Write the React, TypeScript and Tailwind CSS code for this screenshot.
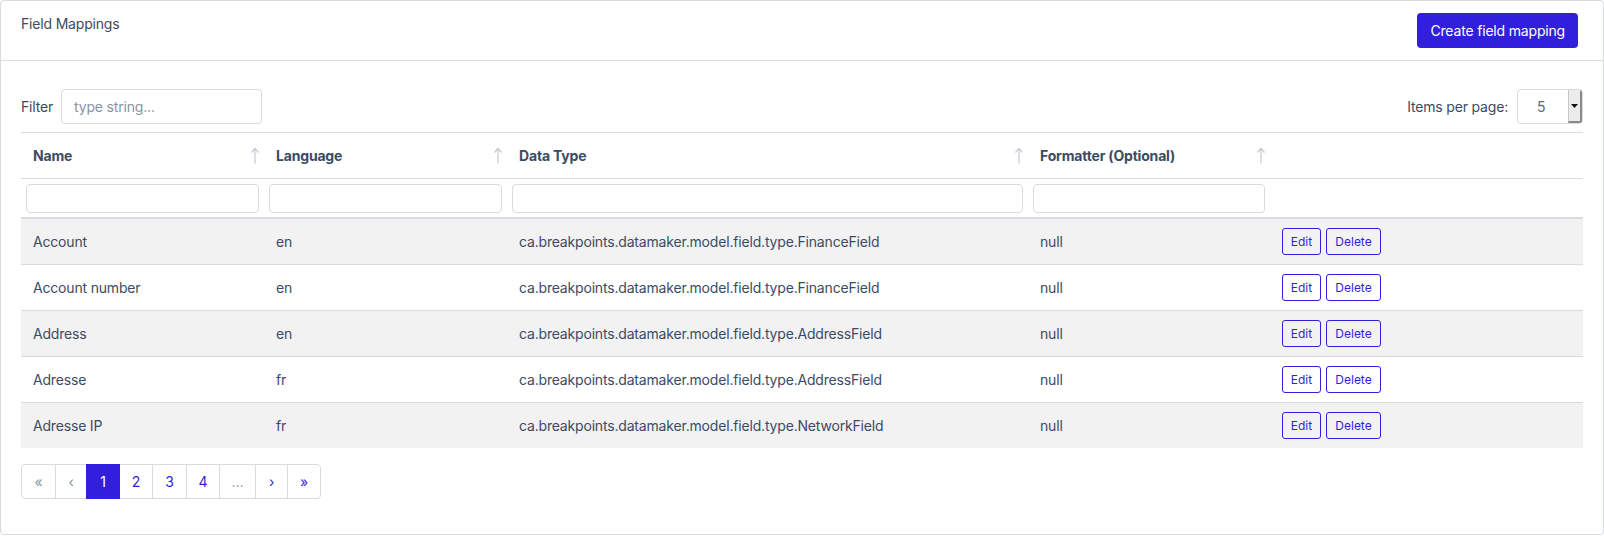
import React from "react";

const rows = [
  { name: "Account", lang: "en", type: "ca.breakpoints.datamaker.model.field.type.FinanceField" },
  { name: "Account number", lang: "en", type: "ca.breakpoints.datamaker.model.field.type.FinanceField" },
  { name: "Address", lang: "en", type: "ca.breakpoints.datamaker.model.field.type.AddressField" },
  { name: "Adresse", lang: "fr", type: "ca.breakpoints.datamaker.model.field.type.AddressField" },
  { name: "Adresse IP", lang: "fr", type: "ca.breakpoints.datamaker.model.field.type.NetworkField" },
];

function SortArrow() {
  return (
    <svg width="10" height="17" viewBox="0 0 10 17" fill="none" className="shrink-0">
      <path d="M5 1.5V16.5" stroke="#c4c9d0" strokeWidth="1.2" />
      <path d="M1.5 5.5L5 1.5L8.5 5.5" stroke="#c4c9d0" strokeWidth="1.2" strokeLinejoin="round" />
    </svg>
  );
}

function Th({ label, w }: { label?: string; w: string }) {
  return (
    <th className={`${w} border-t border-[#d8dbe0] px-3 py-3 text-left align-middle font-bold leading-[21px]`}>
      {label ? (
        <div className="flex items-center justify-between">
          <span>{label}</span>
          <span className="-mr-[8px]">
            <SortArrow />
          </span>
        </div>
      ) : null}
    </th>
  );
}

function FilterCell() {
  return (
    <td className="border-t border-[#d8dbe0] px-[5px] pt-[5px] pb-[4px]">
      <div className="h-[29px] w-full rounded-[4px] border border-[#d8dbe0] bg-white" />
    </td>
  );
}

export default function App() {
  const pageItems = [
    { t: "«", kind: "disabled", w: "w-[35px]" },
    { t: "‹", kind: "disabled", w: "w-[32px]" },
    { t: "1", kind: "active", w: "w-[34px]" },
    { t: "2", kind: "link", w: "w-[34px]" },
    { t: "3", kind: "link", w: "w-[35px]" },
    { t: "4", kind: "link", w: "w-[34px]" },
    { t: "…", kind: "disabled", w: "w-[37px]" },
    { t: "›", kind: "link", w: "w-[33px]" },
    { t: "»", kind: "link", w: "w-[34px]" },
  ];
  return (
    <div
      className="h-[536px] w-[1604px] bg-white text-[14px] tracking-[-0.18px] text-[#3c4b64]"
      style={{ fontFamily: "Inter, 'Liberation Sans', sans-serif" }}
    >
      <div className="h-[535px] rounded-[4px] border border-[#d8dbe0] bg-white">
        <div className="flex items-start justify-between border-b border-[#d8dbe0] px-5 py-3">
          <div className="leading-[21px]">Field Mappings</div>
          <button className="mr-[5px] h-[35px] rounded-[4px] bg-[#321fdb] px-[13px] text-[14px] leading-[21px] text-white">
            Create field mapping
          </button>
        </div>
        <div className="px-5 pt-7">
          <div className="flex items-center justify-between">
            <div className="flex items-center">
              <span className="mr-[8px] leading-[21px]">Filter</span>
              <div className="flex h-[35px] w-[201px] items-center rounded-[4px] border border-[#d8dbe0] px-3 text-[#8a93a2]">
                type string...
              </div>
            </div>
            <div className="flex items-center">
              <span className="mr-[9px] leading-[21px]">Items per page:</span>
              <div className="flex h-[35px] w-[66px] overflow-hidden rounded-[4px] border border-[#d8dbe0] bg-white">
                <div className="flex flex-1 items-center pl-[19px] text-[#5c6873]">5</div>
                <div className="flex w-[14px] items-center justify-center border-l border-r-2 border-b-2 border-l-[#c8c8c8] border-r-[#8a8a8a] border-b-[#8a8a8a] bg-[#ececec]">
                  <svg width="7" height="4" viewBox="0 0 7 4">
                    <path d="M0 0H7L3.5 4Z" fill="#111" />
                  </svg>
                </div>
              </div>
            </div>
          </div>

          <table className="mt-2 w-full table-fixed border-collapse">
            <thead>
              <tr>
                <Th label="Name" w="w-[243px]" />
                <Th label="Language" w="w-[243px]" />
                <Th label="Data Type" w="w-[521px]" />
                <Th label="Formatter (Optional)" w="w-[242px]" />
                <Th w="w-auto" />
              </tr>
              <tr className="border-b-2 border-[#d8dbe0]">
                <FilterCell />
                <FilterCell />
                <FilterCell />
                <FilterCell />
                <td className="border-t border-[#d8dbe0]" />
              </tr>
            </thead>
            <tbody>
              {rows.map((r, i) => (
                <tr key={r.name} className={i % 2 === 0 ? "bg-[#f2f2f3]" : "bg-white"}>
                  <td className={`${i > 0 ? "border-t" : ""} border-[#d8dbe0] px-3 py-3 leading-[21px]`}>{r.name}</td>
                  <td className={`${i > 0 ? "border-t" : ""} border-[#d8dbe0] px-3 py-3 leading-[21px]`}>{r.lang}</td>
                  <td className={`${i > 0 ? "border-t" : ""} border-[#d8dbe0] px-3 py-3 leading-[21px]`}>{r.type}</td>
                  <td className={`${i > 0 ? "border-t" : ""} border-[#d8dbe0] px-3 py-3 leading-[21px]`}>null</td>
                  <td className={`${i > 0 ? "border-t" : ""} border-[#d8dbe0] px-3 py-[8px] align-middle`}>
                    <div className="flex gap-[5px]">
                      <button className="h-[27px] w-[39px] rounded-[3px] border border-[#321fdb] text-[12px] leading-[17px] tracking-normal text-[#321fdb]">
                        Edit
                      </button>
                      <button className="h-[27px] w-[55px] rounded-[3px] border border-[#321fdb] text-[12px] leading-[17px] tracking-normal text-[#321fdb]">
                        Delete
                      </button>
                    </div>
                  </td>
                </tr>
              ))}
            </tbody>
          </table>

          <div className="mt-4 flex">
            {pageItems.map((p, i) => (
              <div
                key={i}
                className={`${p.w} -ml-px flex h-[35px] items-center justify-center border first:ml-0 first:rounded-l-[4px] last:rounded-r-[4px] ${
                  p.kind === "active"
                    ? "z-10 border-[#321fdb] bg-[#321fdb] text-white"
                    : p.kind === "disabled"
                    ? "border-[#d8dbe0] text-[#8a93a2]"
                    : "border-[#d8dbe0] text-[#321fdb]"
                }`}
              >
                {p.t}
              </div>
            ))}
          </div>
        </div>
      </div>
    </div>
  );
}
